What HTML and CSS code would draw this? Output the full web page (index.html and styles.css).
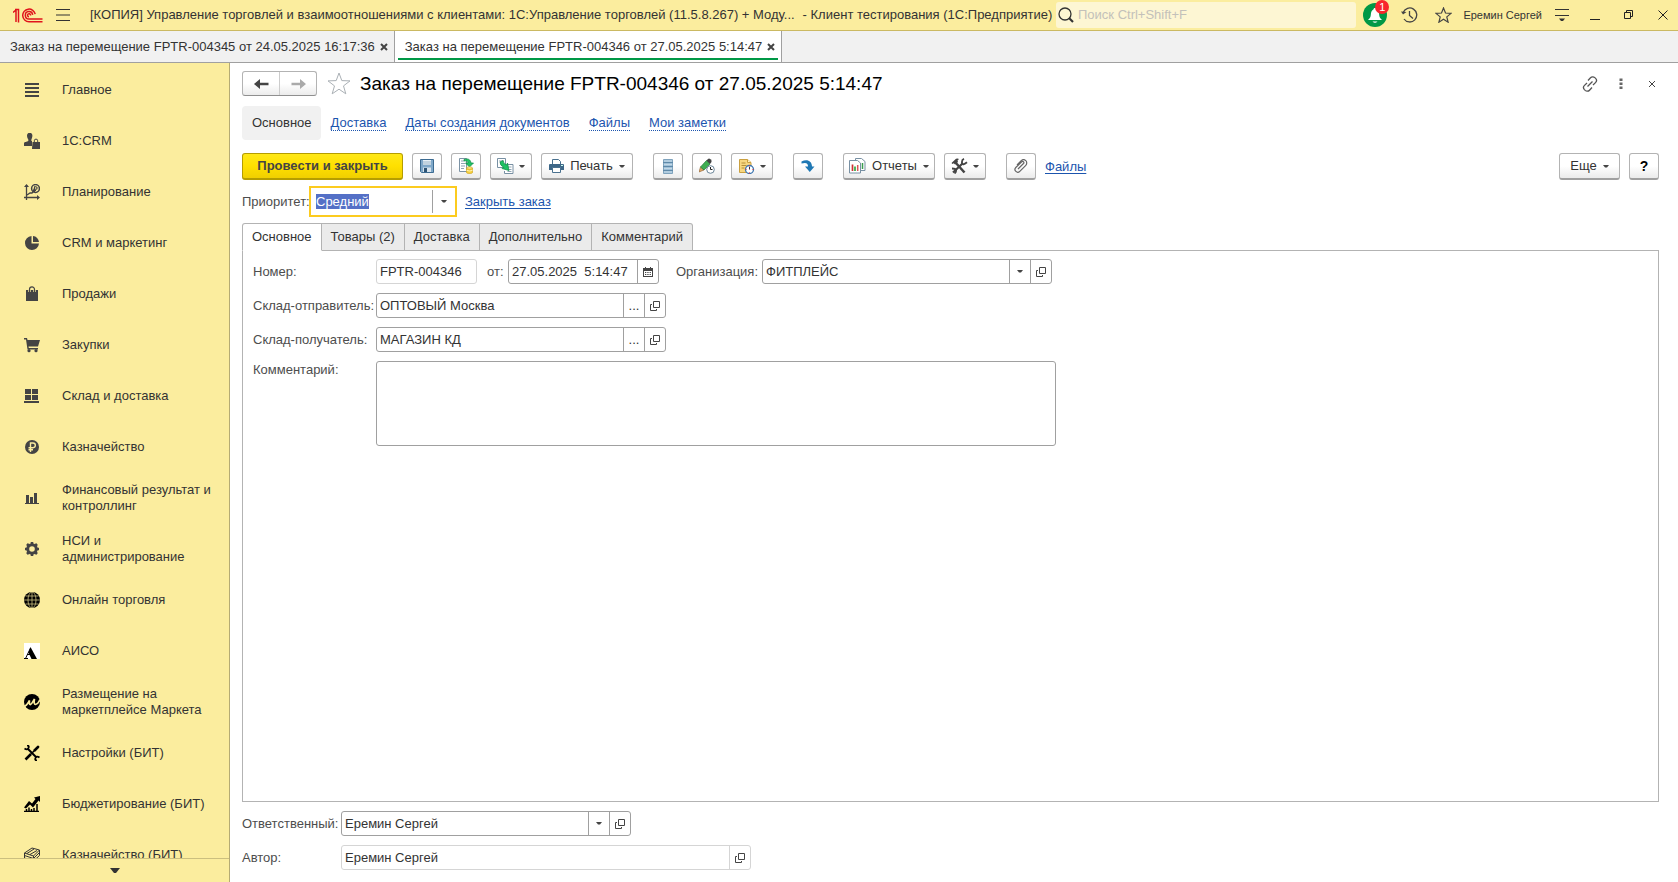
FILE: index.html
```html
<!DOCTYPE html>
<html lang="ru">
<head>
<meta charset="utf-8">
<title>Заказ на перемещение FPTR-004346</title>
<link rel="stylesheet" href="styles.css">
</head>
<body>
<svg class="sprite" aria-hidden="true">
  <symbol id="open" viewBox="0 0 10 10"><path d="M3.500.5h6v6h-6zM2 3.500H.5v6h6V8" fill="none" stroke="#444"/></symbol>
  <symbol id="caret" viewBox="0 0 6 3"><path d="M0 0h6L4 2.500H2z" fill="#444"/></symbol>
  <symbol id="cross" viewBox="0 0 8 8"><path d="M1 1l6 6M7 1L1 7" fill="none" stroke="currentColor"/></symbol>
</svg>

<header class="titlebar">
  <svg class="logo" viewBox="0 0 30 15" fill="none" stroke="#e0131c" stroke-width="1.500"><path d="M0 4.500L3 2v12M2 1.500h3.500V14.500M29.500 13.700H16a6.300 6.300 0 1 1 6.200-7.500M29.500 11H16a3.700 3.700 0 1 1 3.700-4.200"/><path d="M17.500 7.500a1.500 1.500 0 1 0-1.500 1.200"/></svg>
  <button class="plain menu-button" aria-label="Меню"><svg width="14" height="12" viewBox="0 0 14 12"><path d="M0 .5h14M0 6h14M0 11.500h14" stroke="#333" stroke-width="1.200"/></svg></button>
  <div class="app-title"><span>[КОПИЯ] Управление торговлей и взаимоотношениями с клиентами: 1С:Управление торговлей (11.5.8.267) + Моду...</span><span>- Клиент тестирования (1С:Предприятие)</span></div>
  <label class="search">
    <svg width="16" height="16" viewBox="0 0 16 16"><circle cx="7" cy="7" r="6" fill="none" stroke="#333" stroke-width="1.300"/><path d="M11 11l4 4" stroke="#333" stroke-width="2.200"/></svg>
    <input type="search" placeholder="Поиск Ctrl+Shift+F" aria-label="Поиск">
  </label>
  <div class="tools">
    <button class="plain bell" aria-label="Уведомления"><svg width="24" height="24" viewBox="0 0 24 24"><circle cx="12" cy="12" r="12" fill="#009846"/><path d="M12 5c1 0 1.500.6 1.600 1.500 2.200 1 2.400 3 2.600 5.500.2 2 1 3.500 2.800 5H5c1.800-1.500 2.600-3 2.800-5 .2-2.500.4-4.500 2.600-5.500C10.500 5.600 11 5 12 5zM9.500 18.500h5q-2.500 2.500-5 0z" fill="#fff"/></svg><span class="badge">1</span></button>
    <button class="plain history" aria-label="История"><svg width="17" height="16" viewBox="0 0 17 16" fill="none" stroke="#444" stroke-width="1.300"><path d="M2.200 5.500A7 7 0 1 1 3 12M8.500 4v4.500l3.500 3"/><path d="M0 4.500l2 3 3.500-2.500z" fill="#444" stroke="none"/></svg></button>
    <button class="plain favorite" aria-label="Избранное"><svg width="17" height="16" viewBox="0 0 17 16"><path d="M8.500 1l2 5 5.500.4-4.200 3.500 1.300 5.300-4.600-2.900-4.600 2.900 1.300-5.300L1 6.400 6.500 6z" fill="none" stroke="#444" stroke-width="1.200"/></svg></button>
    <button class="plain user">Еремин Сергей</button>
    <button class="plain options" aria-label="Сервис"><svg width="14" height="14" viewBox="0 0 14 14"><path d="M0 1.500h14M0 7.500h14" stroke="#333" stroke-width="1.200"/><path d="M4 10.500h6l-2 2.500H6z" fill="#333"/></svg></button>
    <button class="plain minimize" aria-label="Свернуть"><svg width="10" height="10" viewBox="0 0 10 10"><path d="M0 9.500h10" stroke="#222"/></svg></button>
    <button class="plain" aria-label="Восстановить"><svg width="10" height="10" viewBox="0 0 10 10"><path d="M.5 2.500h6v6h-6zM2.500 2V.5h6v6H7" fill="none" stroke="#222"/></svg></button>
    <button class="plain" aria-label="Закрыть"><svg width="10" height="10" viewBox="0 0 10 10"><path d="M.5.5l9 9M9.500.5l-9 9" stroke="#222"/></svg></button>
  </div>
</header>

<div class="window-tabs">
  <div class="window-tab"><span>Заказ на перемещение FPTR-004345 от 24.05.2025 16:17:36</span><button class="plain tab-close" aria-label="Закрыть вкладку"><svg width="8" height="8"><use href="#cross"/></svg></button></div>
  <div class="window-tab current"><span>Заказ на перемещение FPTR-004346 от 27.05.2025 5:14:47</span><button class="plain tab-close" aria-label="Закрыть вкладку"><svg width="8" height="8"><use href="#cross"/></svg></button></div>
</div>

<div class="workspace">
  <aside class="sidebar">
    <nav class="sections">
      <a href="#"><svg viewBox="0 0 16 16"><path d="M1 2h14M1 6h14M1 10h14M1 14h14" stroke="#444" stroke-width="2"/></svg><span>Главное</span></a>
      <a href="#"><svg viewBox="0 0 16 16" fill="#444"><path d="M3 2.500a2.700 2.700 0 0 1 5.400 0c0 2-.7 3-1 4V8H8v5H0v-2.500C0 8.500 3 9 4.300 8V6.500C3.800 5.500 3 4.500 3 2.500z"/><path d="M8.500 9H16v7H8z"/><path d="M10.300 9V7.800a1.700 1.700 0 0 1 3.400 0V9" fill="none" stroke="#444"/></svg><span>1C:CRM</span></a>
      <a href="#"><svg viewBox="0 0 16 16" fill="none" stroke="#444" stroke-width="1.300"><path d="M2.500 16V1M0 13.500h14M3 11l3-2 2 0 2-2"/><path d="M2.500 0L0 3h5zM16 13.500L13 11v5z" fill="#444" stroke="none"/><circle cx="11.500" cy="4.500" r="3.900" stroke-width="1.500"/><path d="M10.500 8V2.700h1.300a1.300 1.300 0 0 1 0 2.600H9M9 6.500h3" stroke-width="1.100"/></svg><span>Планирование</span></a>
      <a href="#"><svg viewBox="0 0 16 16" fill="#444"><path d="M7.500 1v7.500H15A7 7 0 1 1 7.500 1z"/><path d="M9 1a6.500 6.500 0 0 1 6 6H9z"/></svg><span>CRM и маркетинг</span></a>
      <a href="#"><svg viewBox="0 0 16 16"><path d="M2 4h12v11H2z" fill="#444"/><path d="M5.500 6V3a2.500 2.500 0 0 1 5 0v3" fill="none" stroke="#fbed9e" stroke-width="2.500"/><path d="M5.500 6V3.500a2.500 2.700 0 0 1 5 0V6" fill="none" stroke="#444" stroke-width="1.200"/></svg><span>Продажи</span></a>
      <a href="#"><svg viewBox="0 0 16 16" fill="#444"><path d="M0 1h3l.5 2H16l-2 6.500H4.500L4.800 11H14v1.500H3.500L2 2.500H0z"/><circle cx="5" cy="13.700" r="1.600"/><circle cx="12" cy="13.700" r="1.600"/></svg><span>Закупки</span></a>
      <a href="#"><svg viewBox="0 0 16 16" fill="#444"><path d="M1 1h6v5H1zM8 1h6v5H8zM1 7h6v5H1zM8 7h6v5H8zM0 13h15v2H0z"/></svg><span>Склад и доставка</span></a>
      <a href="#"><svg viewBox="0 0 16 16"><circle cx="8" cy="8" r="7" fill="#444"/><path d="M6.500 13V4H9a2.300 2.300 0 0 1 0 4.700H4.500M4.500 10.700H9" fill="none" stroke="#fbed9e" stroke-width="1.400"/></svg><span>Казначейство</span></a>
      <a href="#"><svg viewBox="0 0 16 16" fill="#444"><path d="M1 13h14v1H1zM2 5h3v8H2zM6 7h3v6H6zM10 3h3v10h-3z"/></svg><span>Финансовый результат и контроллинг</span></a>
      <a href="#"><svg viewBox="0 0 16 16" fill="none" stroke="#444"><circle cx="8" cy="8" r="4.300" stroke-width="3"/><path d="M8 1v2.500M8 12.500V15M1 8h2.500M12.500 8H15M3 3l2 2M11 11l2 2M13 3l-2 2M5 11l-2 2" stroke-width="2.600"/></svg><span>НСИ и администрирование</span></a>
      <a href="#"><svg viewBox="0 0 16 16"><circle cx="8" cy="8" r="8" fill="#000"/><path d="M8 0v16M0 8h16M1.500 4h13M1.500 12h13" stroke="#c9be7e" stroke-width=".8"/><ellipse cx="8" cy="8" rx="4" ry="8" fill="none" stroke="#c9be7e" stroke-width=".8"/></svg><span>Онлайн торговля</span></a>
      <a href="#"><svg viewBox="0 0 16 16"><path d="M0 0h16v16H0z" fill="#fff"/><path d="M6.500 4L13 16H7.500L4.500 9.500z"/><path d="M6.500 5L1.500 15.500M0 15.500h4M3 11.500h4" fill="none" stroke="#000"/></svg><span>АИСО</span></a>
      <a href="#"><svg viewBox="0 0 16 16"><circle cx="8" cy="8" r="8"/><path d="M0 12.500C3 12 4 9 5.500 6.500Q5 11 6.500 10.500C8 10 9 7 10.500 5Q9.500 10.500 11.500 10.500 14 10 16 5.500" fill="none" stroke="#fbed9e" stroke-width="1.700"/></svg><span>Размещение на маркетплейсе Маркета</span></a>
      <a href="#"><svg viewBox="0 0 16 16" fill="none" stroke="#000"><path d="M3.500 3.500l9 9" stroke-width="2"/><path d="M1.500 14.500L7 9M10 6l4.500-4.500" stroke-width="2.600"/><path d="M7 9l8-8" stroke-width="1.500"/><path d="M.5 3.500q3 2 4-.5T3 .5M15.500 12.500q-3-2-4 .5t1.500 2.500" stroke-width="1.800"/></svg><span>Настройки (БИТ)</span></a>
      <a href="#"><svg viewBox="0 0 16 16"><path d="M0 11.500l5-6.500 3 2.500L11.500 3 10 1.500 16 0v6l-1.500-1.500L9 11.500 6 8.500 2 12.500z"/><path d="M2.500 15v-2M5 15v-3.500M7.500 15v-2M10 15v-3M13 15V8M0 15.500h15" stroke="#000" stroke-width="1.500"/></svg><span>Бюджетирование (БИТ)</span></a>
      <a href="#"><svg viewBox="0 0 16 16" fill="none" stroke="#333"><path d="M.5 6L8 1l7.500 2-6 6zM.5 6v5l9 3 6-5.500V3M.5 8.500l9 3 6-6M3 6.500l7-4.500M6 7.500l7-4M9.500 9v5"/></svg><span>Казначейство (БИТ)</span></a>
    </nav>
    <button class="plain scroll-down" aria-label="Прокрутить вниз"><svg width="10" height="6" viewBox="0 0 10 6"><path d="M0 0h10L6 5H4z" fill="#333"/></svg></button>
  </aside>

  <main class="form">
    <div class="heading">
      <div class="nav-pair">
        <button aria-label="Назад"><svg width="15" height="10" viewBox="0 0 15 10"><path d="M0 5l6-5v3.800h8.500v2.400H6V10z" fill="#444"/></svg></button>
        <button aria-label="Вперед"><svg width="15" height="10" viewBox="0 0 15 10"><path d="M15 5L9 0v3.800H.5v2.400H9V10z" fill="#aaa"/></svg></button>
      </div>
      <button class="plain star" aria-label="В избранное"><svg width="24" height="23" viewBox="0 0 24 23"><path d="M12 1l2.800 7.600 8.200.3-6.500 5 2.300 7.900L12 17.200l-6.800 4.600 2.300-7.900-6.500-5 8.200-.3z" fill="none" stroke="#aab0b5"/></svg></button>
      <h1>Заказ на перемещение FPTR-004346 от 27.05.2025 5:14:47</h1>
      <div class="form-actions">
        <button class="plain" aria-label="Ссылка"><svg width="16" height="16" viewBox="0 0 16 16" fill="none" stroke="#555" stroke-width="1.300"><path d="M6 4.500l2.500-2.700a3 3 0 0 1 4.300-.2l.8.800a3 3 0 0 1-.1 4.200L11 9M10 11.500l-2.500 2.700a3 3 0 0 1-4.300.2l-.8-.8a3 3 0 0 1 .1-4.200L5 7M5.500 10.500l5-5"/></svg></button>
        <button class="plain" aria-label="Дополнительно"><svg width="4" height="12" viewBox="0 0 4 12"><path d="M.5.500h3v2.500h-3zM.5 4.500h3v2.500h-3zM.5 8.500h3v2.500h-3z" fill="#666"/></svg></button>
        <button class="plain close-form" aria-label="Закрыть форму"><svg width="8" height="8"><use href="#cross"/></svg></button>
      </div>
    </div>

    <nav class="links">
      <a class="selected" href="#">Основное</a>
      <a href="#"><span>Доставка</span></a>
      <a href="#"><span>Даты создания документов</span></a>
      <a href="#"><span>Файлы</span></a>
      <a href="#"><span>Мои заметки</span></a>
    </nav>

    <div class="toolbar">
      <button class="btn primary">Провести и закрыть</button>
      <button class="btn icon-only" aria-label="Записать"><svg width="16" height="16" viewBox="0 0 16 16"><path d="M1.500 1.500h13v13h-12l-1-1z" fill="#7fa8c9" stroke="#3c6b91"/><path d="M4 2h8v5H4z" fill="#e8f1f7"/><path d="M4 4h8M4 6h8" stroke="#9bb5c8"/><path d="M4 9.500h8V14H4z" fill="#d8e4ed"/><path d="M5 10h3v4H5z" fill="#2e5475"/></svg></button>
      <button class="btn icon-only" aria-label="Провести"><svg width="16" height="16" viewBox="0 0 16 16"><path d="M1.500.5h7v13h-7z" fill="#fff" stroke="#7c93a5"/><path d="M3 3h3M3 5.500h4M3 8h4M3 10.500h3" stroke="#8fa3b2"/><path d="M6 1.500c4-1.500 6.500 0 7 3.500h2.500L11.500 9 7.500 5H10c0-1.500-1-2.500-4-2z" fill="#1fc164" stroke="#0a8a41" stroke-width=".7"/><path d="M8.500 10v4.500c0 1.500 6 1.500 6 0V10" fill="#f5cf3d" stroke="#c89a16" stroke-width=".6"/><ellipse cx="11.500" cy="10" rx="3" ry="1.200" fill="#ffe98a" stroke="#c89a16" stroke-width=".6"/><path d="M8.500 12.300q3 1.500 6 0" fill="none" stroke="#fff3b5"/></svg></button>
      <button class="btn with-caret" aria-label="Создать на основании"><svg width="17" height="16" viewBox="0 0 17 16"><path d="M.5.500h8v9h-8zM9.500 6.500h6.500v9H7.500V13" fill="#fff" stroke="#7890a3"/><path d="M2 3h5M10.500 9h4M10.500 11.500h4M10.500 13.500h4" stroke="#8fa3b2"/><path d="M3 4l3-1.500q.5 3.500 3.500 4.500l1-2 1.500 7.500-7-2L6.500 9Q3 7.500 3 4z" fill="#1fc164" stroke="#0a8a41" stroke-width=".7"/></svg><svg class="caret"><use href="#caret"/></svg></button>
      <button class="btn with-caret text"><svg width="15" height="14" viewBox="0 0 15 14"><path d="M3.500 6V.5h6l2 2V6" fill="#fff" stroke="#49718f"/><path d="M1 5h13q1 0 1 1v5H0V6q0-1 1-1z" fill="#3d6788"/><path d="M3.500 8.500h8v5h-8z" fill="#fff" stroke="#49718f"/><path d="M12 6.500h2" stroke="#cfe"/></svg><span>Печать</span><svg class="caret"><use href="#caret"/></svg></button>
      <button class="btn icon-only group" aria-label="Структура"><svg width="12" height="15" viewBox="0 0 12 15"><path d="M1.500.5h9v14h-9z" fill="#9fc0d8" stroke="#7fa3bd"/><path d="M1 3.500h10M1 7.500h10M1 11.500h10" stroke="#5f89a8"/><path d="M2 2h8M2 5.500h8M2 9.500h8M2 13h8" stroke="#c3d8e6"/></svg></button>
      <button class="btn icon-only" aria-label="История изменений"><svg width="16" height="16" viewBox="0 0 16 16"><path d="M0 14l1.500-5 3.500 3z" fill="#e0a868" stroke="#8c5a2a" stroke-width=".6"/><path d="M1.500 9L7.500 2.500 11 6l-6 6z" fill="#3fae52" stroke="#23763a" stroke-width=".7"/><path d="M7.500 2.500L9 1q1-1 2.500.3T12.500 4L11 6z" fill="#444"/><circle cx="11.500" cy="11.500" r="3.800" fill="#fff" stroke="#6b8598"/><path d="M11.500 9v2.500h2" fill="none" stroke="#222"/></svg></button>
      <button class="btn with-caret" aria-label="Задачи"><svg width="17" height="16" viewBox="0 0 17 16"><path d="M1.500 1.500h8l3.500 3v10H1.500z" fill="#f7d780" stroke="#caa040"/><path d="M9.500 1.500v3H13" fill="#fff0bd" stroke="#caa040"/><path d="M3.500 5h4M3.500 7.500h5M3.500 10h3" stroke="#b58e38"/><circle cx="11.500" cy="11.500" r="4" fill="#fff" stroke="#3c75b0" stroke-width="1.300"/><path d="M11.500 9v2.500" stroke="#333"/><path d="M11.500 7.500v1M11.500 14.500v1M7.500 11.500h1M14.500 11.500h1" stroke="#e33"/></svg><svg class="caret"><use href="#caret"/></svg></button>
      <button class="btn icon-only group" aria-label="Перейти"><svg width="14" height="13" viewBox="0 0 14 13"><path d="M.5 1.500C6-1.500 11 1 11 6.500h2.500L8.800 12 4 6.500h3c0-3-1.500-4.500-6.500-3z" fill="#1f78b4"/></svg></button>
      <button class="btn with-caret text group"><svg width="17" height="16" viewBox="0 0 17 16"><path d="M6.500.5h6l3.500 3v9H6.500z" fill="#fff" stroke="#7890a3"/><path d="M13.500 5v6" stroke="#3a9d4e" stroke-width="1.500"/><path d="M.5 2.500h8l3 2.500v10H.5z" fill="#fff" stroke="#7890a3"/><path d="M3.500 13V6.500" stroke="#c33" stroke-width="1.700"/><path d="M6 13V8.500" stroke="#2faa44" stroke-width="1.700"/><path d="M8.700 13V7" stroke="#d55" stroke-width="1.500"/></svg><span>Отчеты</span><svg class="caret"><use href="#caret"/></svg></button>
      <button class="btn with-caret" aria-label="Инструменты"><svg width="17" height="16" viewBox="0 0 17 16" fill="none" stroke="#444"><path d="M4 4l9.500 10.500" stroke-width="2.500"/><path d="M.5 5L5 .8q2-.6 3 .2L6.500 2.500 7 4 4 6.500 2.800 5.300 1.500 6z" fill="#444" stroke="none"/><path d="M2 14.500L12 5" stroke-width="2.200"/><path d="M13 .8Q10.500 2 11 5t5-.8M1 10.500q3.500 0 4 1.500t-1.500 3.500" stroke-width="1.800"/></svg><svg class="caret"><use href="#caret"/></svg></button>
      <button class="btn icon-only group" aria-label="Присоединенные файлы"><svg width="14" height="14" viewBox="0 0 14 14"><path d="M4 10l5.500-5.500a1.200 1.200 0 0 0-1.800-1.700L1.800 8.500a2.700 2.700 0 0 0 4 3.800l6-6a3.200 3.200 0 0 0-4.600-4.600L3 6" fill="none" stroke="#666" stroke-width="1.200"/></svg></button>
      <a class="link" href="#">Файлы</a>
      <div class="toolbar-end">
        <button class="btn more">Еще<svg class="caret"><use href="#caret"/></svg></button>
        <button class="btn icon-only help">?</button>
      </div>
    </div>

    <div class="priority">
      <label for="priority">Приоритет:</label>
      <div class="focus-field"><input id="priority" value="Средний"><button class="plain" aria-label="Выбрать"><svg class="caret"><use href="#caret"/></svg></button></div>
      <a class="link" href="#">Закрыть заказ</a>
    </div>

    <div class="page-tabs" role="tablist">
      <button role="tab" aria-selected="true">Основное</button>
      <button role="tab">Товары (2)</button>
      <button role="tab">Доставка</button>
      <button role="tab">Дополнительно</button>
      <button role="tab">Комментарий</button>
    </div>

    <section class="panel">
      <label for="number">Номер:</label>
      <div class="row">
        <div class="field short readonly"><input id="number" value="FPTR-004346" readonly></div>
        <label class="from" for="date">от:</label>
        <div class="field date"><input id="date" value="27.05.2025  5:14:47"><button aria-label="Календарь"><svg width="10" height="10" viewBox="0 0 10 10"><path d="M0 1h10v9H0z" fill="#444"/><path d="M2.500 0v2M7.500 0v2" stroke="#444"/><path d="M1 4h8v5H1z" fill="#fff"/><path d="M2 5.500h6M2 7.500h6" stroke="#444" stroke-dasharray="1.300 1"/></svg></button></div>
        <label class="org-label" for="org">Организация:</label>
        <div class="field"><input id="org" value="ФИТПЛЕЙС"><button aria-label="Выбрать"><svg class="caret"><use href="#caret"/></svg></button><button aria-label="Открыть"><svg width="10" height="10"><use href="#open"/></svg></button></div>
      </div>
      <label for="source">Склад-отправитель:</label>
      <div class="field"><input id="source" value="ОПТОВЫЙ Москва"><button aria-label="Выбрать">...</button><button aria-label="Открыть"><svg width="10" height="10"><use href="#open"/></svg></button></div>
      <label for="target">Склад-получатель:</label>
      <div class="field"><input id="target" value="МАГАЗИН КД"><button aria-label="Выбрать">...</button><button aria-label="Открыть"><svg width="10" height="10"><use href="#open"/></svg></button></div>
      <label class="top" for="comment">Комментарий:</label>
      <textarea id="comment"></textarea>
    </section>

    <footer class="signatures">
      <label for="manager">Ответственный:</label>
      <div class="field"><input id="manager" value="Еремин Сергей"><button aria-label="Выбрать"><svg class="caret"><use href="#caret"/></svg></button><button aria-label="Открыть"><svg width="10" height="10"><use href="#open"/></svg></button></div>
      <label for="author">Автор:</label>
      <div class="field wide readonly"><input id="author" value="Еремин Сергей" readonly><button aria-label="Открыть"><svg width="10" height="10"><use href="#open"/></svg></button></div>
    </footer>
  </main>
</div>
<script src="script.js"></script>
</body>
</html>
```

FILE: styles.css
```css
* { box-sizing: border-box; }
body {
  margin: 0;
  height: 100vh;
  display: flex;
  flex-direction: column;
  overflow: hidden;
  background: #fff;
  color: #333;
  font: 13px/16px "Liberation Sans", Arial, sans-serif;
}
button, input, textarea { font: inherit; color: inherit; }
button { padding: 0; }
svg { display: block; flex: none; }
.sprite { position: absolute; width: 0; height: 0; }
.plain { display: flex; align-items: center; justify-content: center; border: 0; background: none; }
.caret { width: 6px; height: 3px; }

.titlebar {
  display: flex;
  align-items: center;
  flex: none;
  height: 31px;
  padding: 0 10px 0 13px;
  background: #fbed9e;
  border-bottom: 1px solid #cbb962;
}
.logo { width: 30px; height: 15px; }
.menu-button { margin: 0 20px 0 13px; }
.app-title { display: flex; flex: none; gap: 8px; width: 966px; white-space: nowrap; }
.search {
  display: flex;
  align-items: center;
  flex: 1;
  height: 26px;
  padding-left: 2px;
  gap: 4px;
  border-radius: 3px;
  background: #fdf6d3;
}
.search input { flex: 1; min-width: 0; border: 0; padding: 0; background: none; outline: 0; }
.search input::placeholder { color: #c3c1ba; opacity: 1; }
.tools { display: flex; align-items: center; margin-left: 7px; gap: 24px; }
.bell { position: relative; }
.badge {
  position: absolute;
  top: -3px;
  left: 12px;
  width: 14px;
  height: 14px;
  border-radius: 7px;
  background: #f8262c;
  color: #fff;
  font-size: 11px;
  line-height: 14px;
}
.history { margin-left: -10px; }
.favorite { margin-left: -7px; }
.user { margin-left: -13px; font-size: 11px; white-space: nowrap; }
.options { margin-left: -11px; }
.minimize { margin-left: -3px; }

.window-tabs { display: flex; flex: none; height: 32px; background: #f1f1f1; border-bottom: 1px solid #a0a0a0; }
.window-tab { position: relative; display: flex; align-items: center; gap: 5px; padding: 0 6px 0 10px; border-right: 1px solid #a0a0a0; white-space: nowrap; }
.window-tab.current { background: #fff; }
.window-tab.current::after { content: ""; position: absolute; left: 3px; right: 3px; bottom: 2px; height: 2px; background: #009846; }
.tab-close svg { stroke-width: 2; color: #444; }

.workspace { display: flex; flex: 1; min-height: 0; }
.sidebar { display: flex; flex-direction: column; flex: none; width: 230px; background: #fbed9e; border-right: 1px solid #b5ab74; }
.sections { flex: 1; min-height: 0; padding-top: 1px; overflow: hidden; }
.sections a { display: flex; align-items: center; gap: 22px; height: 51px; padding: 0 12px 0 24px; color: #333; text-decoration: none; }
.sections svg { width: 16px; height: 16px; }
.scroll-down { flex: none; height: 24px; border-top: 1px solid #cbbf7f; }

.form { display: flex; flex-direction: column; flex: 1; min-width: 0; padding: 8px 19px 12px 12px; }
.heading { display: flex; align-items: center; height: 25px; }
.nav-pair { display: flex; width: 75px; height: 25px; border: 1px solid #b3b3b3; border-bottom-color: #8f8f8f; border-radius: 3px; background: linear-gradient(#fff 50%, #ececec); }
.nav-pair button { display: flex; flex: 1; align-items: center; justify-content: center; border: 0; background: none; }
.nav-pair button + button { border-left: 1px solid #ccc; }
.star { margin: 0 9px 0 10px; }
h1 { margin: 0; color: #000; font-size: 19px; line-height: 22px; font-weight: 400; }
.form-actions { display: flex; align-items: center; gap: 21px; margin: 0 3px 0 auto; }
.form-actions svg { color: #444; }
.close-form { margin-left: 4px; }

.links { display: flex; align-items: center; gap: 19px; margin-top: 10px; }
.links a { color: #1c55ae; text-decoration: none; }
.links a span { display: block; line-height: 15px; border-bottom: 1px dotted #1c55ae; }
.links .selected { height: 34px; margin-right: -9px; padding: 9px 9px 9px 10px; border-radius: 4px; background: #f1f1f1; color: #333; }

.toolbar { display: flex; align-items: center; gap: 9px; margin-top: 13px; }
.btn {
  display: flex;
  align-items: center;
  justify-content: center;
  flex: none;
  height: 27px;
  padding: 0;
  border: 1px solid #b3b3b3;
  border-bottom: 2px solid #a0a0a0;
  border-radius: 3px;
  background: linear-gradient(#fff 50%, #ebebeb);
  white-space: nowrap;
}
.primary { width: 161px; border-color: #b59d00; background: linear-gradient(#ffe817, #ffe000 50%, #f0cf00); color: #444; font-weight: 700; }
.icon-only { width: 30px; }
.with-caret { width: 42px; gap: 5px; }
.text { width: 92px; gap: 6px; }
.group { margin-left: 11px; }
.link { color: #1c55ae; text-decoration: underline; text-underline-offset: 2px; }
.toolbar-end { display: flex; gap: 9px; margin-left: auto; }
.more { width: 61px; gap: 6px; }
.help { color: #000; font-size: 14px; font-weight: 700; }

.priority { display: flex; align-items: center; margin-top: 6px; color: #4d4d4d; }
.priority label { width: 67px; }
.focus-field { display: flex; align-items: center; width: 148px; height: 31px; margin-right: 8px; border: 2px solid #fccb1f; background: #fff; }
.focus-field input { flex: 1; min-width: 0; height: 23px; border: 0; border-right: 1px solid #a0a0a0; padding: 0 5px; outline: 0; }
.focus-field input::selection { background: #5470c6; color: #fff; }
.focus-field button { width: 22px; }

.page-tabs { display: flex; height: 28px; margin: 6px 0 -1px; }
.page-tabs button { position: relative; padding: 0 9px; border: 1px solid #b3b3b3; border-left: 0; background: #ebebeb; white-space: nowrap; }
.page-tabs button:first-child { border-left: 1px solid #b3b3b3; border-radius: 3px 0 0 0; }
.page-tabs button:last-child { border-radius: 0 3px 0 0; }
.page-tabs [aria-selected="true"] { background: #fff; border-bottom-color: #fff; }

.panel {
  display: grid;
  grid-template-columns: 113px minmax(0, 1fr);
  grid-auto-rows: max-content;
  align-items: center;
  column-gap: 10px;
  row-gap: 9px;
  flex: 1;
  min-height: 0;
  padding: 8px 10px;
  border: 1px solid #b3b3b3;
}
label { color: #4d4d4d; white-space: nowrap; }
.top { align-self: start; padding-top: 1px; }
.row { display: flex; align-items: center; }
.field { display: flex; width: 290px; height: 25px; border: 1px solid #a0a0a0; border-radius: 3px; background: #fff; }
.field input { flex: 1; min-width: 0; border: 0; padding: 0 3px; background: none; outline: 0; white-space: pre; }
.field button { display: flex; align-items: center; justify-content: center; width: 21px; border: 0; border-left: 1px solid #a0a0a0; background: none; }
.short { width: 101px; }
.date { width: 151px; }
.from { width: 31px; padding-left: 10px; }
.org-label { width: 103px; padding-left: 17px; }
.readonly, .readonly button { border-color: #d5d5d5; }
.wide { width: 410px; }
textarea { display: block; width: 680px; max-width: 100%; height: 85px; border: 1px solid #a0a0a0; border-radius: 3px; resize: none; outline: 0; }

.signatures { display: grid; grid-template-columns: 90px minmax(0, 1fr); align-items: center; column-gap: 9px; row-gap: 9px; margin-top: 9px; }
```

FILE: script.js
```js
const priority = document.getElementById("priority");
priority.focus();
priority.select();
```
